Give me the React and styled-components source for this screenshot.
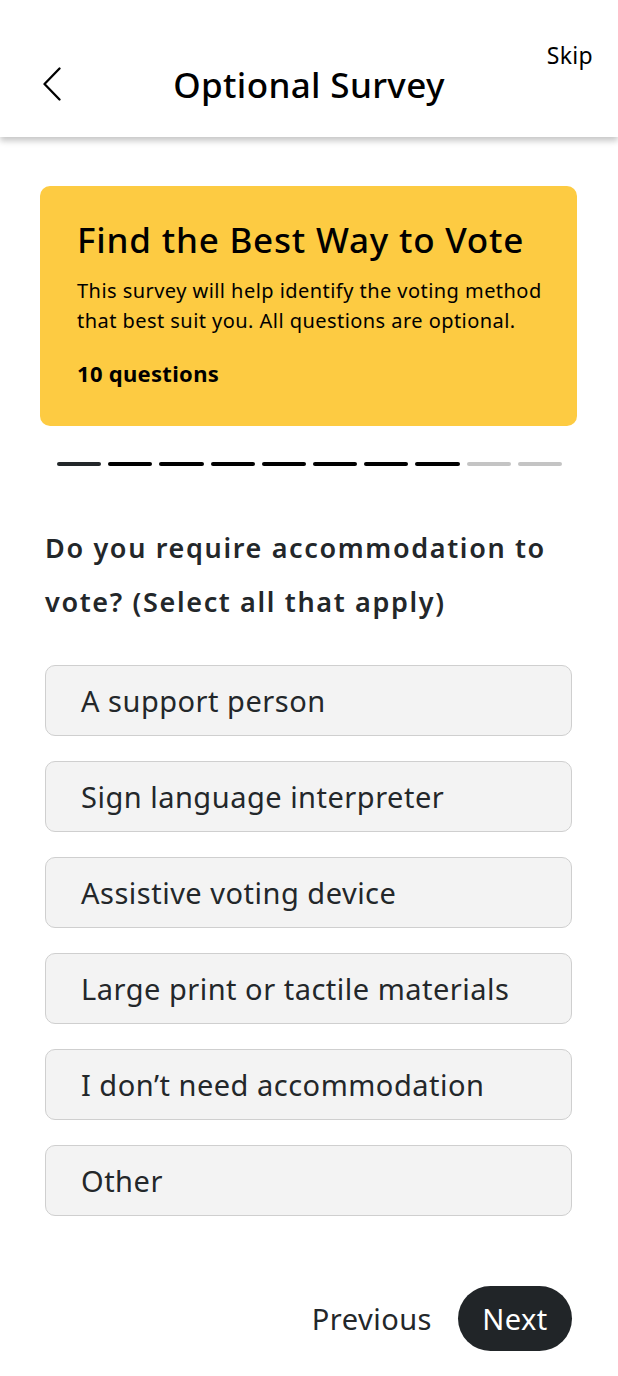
import React from "react";
import styled, { createGlobalStyle } from "styled-components";

const GlobalStyle = createGlobalStyle`
  * { box-sizing: border-box; }
  body {
    margin: 0;
    background: #fff;
    font-family: "Noto Sans", Lato, sans-serif;
    color: #23272a;
  }
`;

const options = [
  "A support person",
  "Sign language interpreter",
  "Assistive voting device",
  "Large print or tactile materials",
  "I don\u2019t need accommodation",
  "Other",
];

const TOTAL = 10;
const DONE = 8;

const App = () => (
  <Page>
    <GlobalStyle />
    <Header>
      <BackButton aria-label="Back">
        <svg width="18" height="34" viewBox="0 0 18 34" fill="none">
          <path d="M16.5 1.5 L1.5 17 L16.5 32.5" stroke="#000" strokeWidth="2.3" strokeLinecap="round" strokeLinejoin="round" />
        </svg>
      </BackButton>
      <Title>Optional Survey</Title>
      <Skip>Skip</Skip>
    </Header>

    <Content>
      <Intro>
        <IntroTitle>Find the Best Way to Vote</IntroTitle>
        <IntroText>
          This survey will help identify the voting method that best suit you. All questions are optional.
        </IntroText>
        <Count>10 questions</Count>
      </Intro>

      <Progress>
        {Array.from({ length: TOTAL }).map((_, idx) => (
          <Segment key={idx} $state={idx === 0 ? "first" : idx < DONE ? "done" : "todo"} />
        ))}
      </Progress>

      <Question>Do you require accommodation to vote? (Select all that apply)</Question>

      <Options>
        {options.map((label) => (
          <Option key={label}>{label}</Option>
        ))}
      </Options>

      <Footer>
        <Previous>Previous</Previous>
        <Next>Next</Next>
      </Footer>
    </Content>
  </Page>
);

const Page = styled.div`
  width: 618px;
  min-height: 1376px;
`;

const Header = styled.header`
  position: relative;
  height: 137px;
  display: flex;
  align-items: center;
  justify-content: center;
  background: #fff;
  box-shadow: 0 4px 6px rgba(0, 0, 0, 0.22);
  padding-top: 32px;
`;

const BackButton = styled.button`
  position: absolute;
  left: 43px;
  top: 67px;
  border: 0;
  background: none;
  padding: 0;
  display: flex;
`;

const Title = styled.h1`
  margin: 0;
  font-size: 35px;
  font-weight: 500;
  letter-spacing: 0.35px;
  line-height: 44px;
  color: #000;
`;

const Skip = styled.span`
  position: absolute;
  right: 25px;
  top: 39px;
  font-size: 23px;
  letter-spacing: 0.3px;
  color: #000;
`;

const Content = styled.main`
  padding: 49px 45px 0 45px;
  display: flex;
  flex-direction: column;
`;

const Intro = styled.section`
  margin: 0 -5px 0 -5px;
  width: 537px;
  background: #fdcb42;
  border-radius: 10px;
  padding: 34px 25px 38px 37px;
`;

const IntroTitle = styled.h2`
  margin: 0 0 16px;
  font-size: 35px;
  font-weight: 500;
  letter-spacing: 0.8px;
  color: #000;
  line-height: 40px;
`;

const IntroText = styled.p`
  margin: 0;
  font-size: 20px;
  letter-spacing: 0.45px;
  line-height: 30px;
  color: #000;
`;

const Count = styled.p`
  margin: 22px 0 0;
  font-size: 22px;
  font-weight: 700;
  letter-spacing: 0.3px;
  color: #000;
  line-height: 30px;
`;

const Progress = styled.div`
  display: grid;
  grid-template-columns: repeat(${TOTAL}, 1fr);
  column-gap: 7px;
  margin: 36px 11px 0 12px;
`;

const segmentColors = {
  first: "#23272a",
  done: "#000",
  todo: "#c4c4c4",
};

const Segment = styled.span`
  height: 4px;
  border-radius: 2px;
  background: ${(p) => segmentColors[p.$state]};
`;

const Question = styled.h3`
  margin: 55px 0 0;
  font-size: 27px;
  font-weight: 600;
  letter-spacing: 1.65px;
  line-height: 54px;
  color: #23272a;
`;

const Options = styled.div`
  margin-top: 36px;
  display: flex;
  flex-direction: column;
  gap: 25px;
`;

const Option = styled.button`
  height: 71px;
  width: 527px;
  display: flex;
  align-items: center;
  padding: 0 0 0 35px;
  background: #f3f3f3;
  border: 1.5px solid #cfcfcf;
  border-radius: 10px;
  font-family: inherit;
  font-size: 29px;
  letter-spacing: 0.5px;
  color: #23272a;
  text-align: left;
`;

const Footer = styled.div`
  margin-top: 70px;
  display: flex;
  justify-content: flex-end;
  align-items: center;
  gap: 26px;
  width: 527px;
`;

const Previous = styled.button`
  border: 0;
  background: none;
  padding: 0;
  font-family: inherit;
  font-size: 29px;
  letter-spacing: 0.5px;
  color: #23272a;
`;

const Next = styled.button`
  height: 65px;
  width: 114px;
  border: 0;
  border-radius: 33px;
  background: #212528;
  color: #fff;
  font-family: inherit;
  font-size: 29px;
  letter-spacing: 0.5px;
`;

export default App;
